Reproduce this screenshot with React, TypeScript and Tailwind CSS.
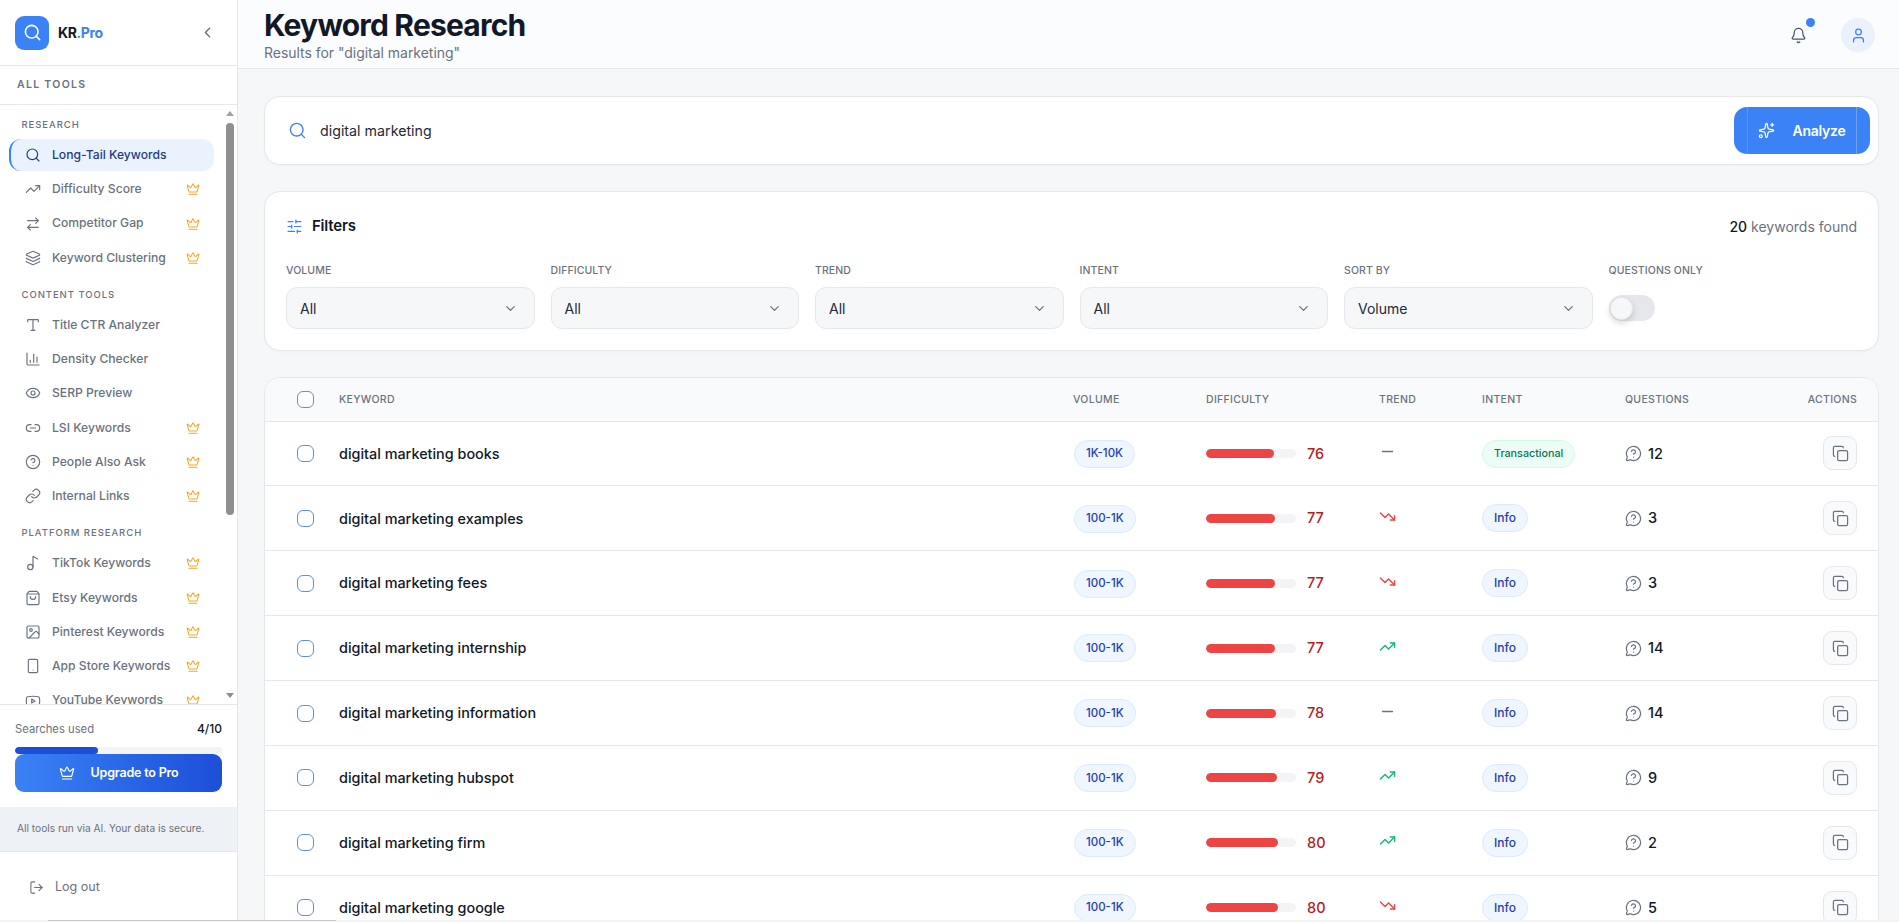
import React from "react";
import {
  Search, ChevronLeft, TrendingUp, TrendingDown, ArrowRightLeft, Layers, Type, ChartColumn, Eye, Link2,
  CircleHelp, Link, Music2, ShoppingBag, Image, Smartphone, Youtube, Crown, LogOut, Bell, User, Sparkles,
  SlidersHorizontal, ChevronDown, MessageCircleQuestion, Copy, Minus,
} from "lucide-react";

type Tool = { label: string; icon: React.ElementType; pro?: boolean; active?: boolean };
const groups: { title: string; items: Tool[] }[] = [
  {
    title: "RESEARCH",
    items: [
      { label: "Long-Tail Keywords", icon: Search, active: true },
      { label: "Difficulty Score", icon: TrendingUp, pro: true },
      { label: "Competitor Gap", icon: ArrowRightLeft, pro: true },
      { label: "Keyword Clustering", icon: Layers, pro: true },
    ],
  },
  {
    title: "CONTENT TOOLS",
    items: [
      { label: "Title CTR Analyzer", icon: Type },
      { label: "Density Checker", icon: ChartColumn },
      { label: "SERP Preview", icon: Eye },
      { label: "LSI Keywords", icon: Link2, pro: true },
      { label: "People Also Ask", icon: CircleHelp, pro: true },
      { label: "Internal Links", icon: Link, pro: true },
    ],
  },
  {
    title: "PLATFORM RESEARCH",
    items: [
      { label: "TikTok Keywords", icon: Music2, pro: true },
      { label: "Etsy Keywords", icon: ShoppingBag, pro: true },
      { label: "Pinterest Keywords", icon: Image, pro: true },
      { label: "App Store Keywords", icon: Smartphone, pro: true },
      { label: "YouTube Keywords", icon: Youtube, pro: true },
    ],
  },
];

const rows = [
  { k: "digital marketing books", v: "1K-10K", d: 76, t: "flat", i: "Transactional", q: 12 },
  { k: "digital marketing examples", v: "100-1K", d: 77, t: "down", i: "Info", q: 3 },
  { k: "digital marketing fees", v: "100-1K", d: 77, t: "down", i: "Info", q: 3 },
  { k: "digital marketing internship", v: "100-1K", d: 77, t: "up", i: "Info", q: 14 },
  { k: "digital marketing information", v: "100-1K", d: 78, t: "flat", i: "Info", q: 14 },
  { k: "digital marketing hubspot", v: "100-1K", d: 79, t: "up", i: "Info", q: 9 },
  { k: "digital marketing firm", v: "100-1K", d: 80, t: "up", i: "Info", q: 2 },
  { k: "digital marketing google", v: "100-1K", d: 80, t: "down", i: "Info", q: 5 },
];

const filters = [
  { l: "VOLUME", v: "All" },
  { l: "DIFFICULTY", v: "All" },
  { l: "TREND", v: "All" },
  { l: "INTENT", v: "All" },
  { l: "SORT BY", v: "Volume" },
];

function Trend({ t }: { t: string }) {
  if (t === "up") return <TrendingUp className="w-[17px] h-[17px] text-[#10b981] -translate-y-[2px]" />;
  if (t === "down") return <TrendingDown className="w-[17px] h-[17px] text-[#ef4444] -translate-y-[2px]" />;
  return <Minus className="w-[17px] h-[17px] text-[#6b7280] -translate-y-[2px]" />;
}

export default function App() {
  return (
    <div className="relative flex h-[922px] w-[1899px] overflow-hidden bg-[#f5f7f9] font-['Inter','Noto_Sans',sans-serif] text-[#111827]">
      <aside className="flex h-full w-[238px] shrink-0 flex-col border-r border-[#e5e7eb] bg-white">
        <div className="flex h-[66px] shrink-0 items-center border-b border-[#e5e7eb] pl-[15px] pr-[21px]">
          <div className="flex h-[34px] w-[34px] items-center justify-center rounded-[9px] bg-[#3b82f6]">
            <Search className="h-[19px] w-[19px] text-white" strokeWidth={2} />
          </div>
          <span className="ml-[9px] text-[14px] font-bold tracking-[-0.4px] text-[#111827]">
            KR<span className="text-[#3b82f6]">.Pro</span>
          </span>
          <ChevronLeft className="ml-auto h-[17px] w-[17px] text-[#6b7280]" />
        </div>
        <div className="flex h-[39px] shrink-0 items-center border-b border-[#e5e7eb] pl-[17px] text-[10.5px] font-semibold tracking-[1.3px] text-[#6b7280]">
          ALL TOOLS
        </div>
        <div className="relative h-[599px] shrink-0 overflow-hidden pl-[9px] pr-[23px]">
          {groups.map((g, gi) => (
            <div key={g.title} className={gi === 0 ? "pt-[12px]" : "pt-[10.85px]"}>
              <div className="mb-[7.85px] h-[14px] translate-y-[0.5px] pl-[12.5px] text-[9.5px] font-medium leading-[14px] tracking-[0.95px] text-[#6b7280]">{g.title}</div>
              {g.items.map((it) => {
                const Icon = it.icon;
                return (
                  <div
                    key={it.label}
                    className={
                      it.active
                        ? "mb-[2px] flex h-[32.3px] items-center rounded-[12px] border-l-[2px] border-[#3b82f6] bg-[#eaf2fe] pl-[14px] pr-[14px] text-[#1e3a8a]"
                        : "mb-[2px] flex h-[32.3px] items-center pl-[16px] pr-[14px] text-[#6b7280]"
                    }
                  >
                    <Icon className="h-[16px] w-[16px] shrink-0" strokeWidth={1.75} />
                    <span className="ml-[11px] whitespace-nowrap text-[12.15px] font-medium">{it.label}</span>
                    {it.pro && <Crown className="ml-auto h-[14px] w-[14px] shrink-0 text-[#f5a524]" strokeWidth={1.75} />}
                  </div>
                );
              })}
            </div>
          ))}
          <div className="absolute right-[2px] top-0 flex h-full w-[11px] flex-col items-center bg-white">
            <div className="mt-[6px] h-0 w-0 border-x-[4px] border-b-[5px] border-x-transparent border-b-[#9ca3af]" />
            <div className="mt-[7px] h-[392px] w-[8px] rounded-[4px] bg-[#8f8f8f]" />
            <div className="mb-[6px] mt-auto h-0 w-0 border-x-[4px] border-t-[5px] border-x-transparent border-t-[#8f8f8f]" />
          </div>
        </div>
        <div className="shrink-0 border-t border-[#e5e7eb] bg-white px-[15px]">
          <div className="mt-[15px] flex h-[18px] items-center justify-between">
            <span className="text-[11.25px] text-[#6b7280]">Searches used</span>
            <span className="text-[12px] font-medium text-[#111827]">4/10</span>
          </div>
          <div className="mt-[9px] h-[7px] w-[207px] overflow-hidden rounded-full bg-[#f3f4f6]">
            <div className="h-full w-[40%] rounded-full bg-[#1d4ed8]" />
          </div>
          <div className="flex h-[38px] w-[207px] items-center justify-center rounded-[9px] bg-gradient-to-r from-[#3b82f6] to-[#1d4ed8] text-white">
            <Crown className="h-[16px] w-[16px]" strokeWidth={1.75} />
            <span className="ml-[16px] text-[12.5px] font-semibold tracking-[-0.2px]">Upgrade to Pro</span>
          </div>
        </div>
        <div className="mt-[15px] flex h-[45px] shrink-0 items-center border-b border-[#e5e7eb] bg-[#eef1f6] pl-[17px] text-[10.2px] text-[#6b7280]">
          All tools run via AI. Your data is secure.
        </div>
        <div className="flex items-center pl-[29px] pt-[26px] text-[#6b7280]">
          <LogOut className="h-[15px] w-[15px]" strokeWidth={1.75} />
          <span className="ml-[11px] text-[12.5px]">Log out</span>
        </div>
      </aside>

      <main className="flex min-w-0 flex-1 flex-col">
        <header className="flex h-[69px] shrink-0 items-start justify-between border-b border-[#e5e7eb] bg-[#fbfcfe] pl-[26px] pr-[24px]">
          <div className="pt-[7px]">
            <h1 className="text-[30px] font-bold leading-[36px] tracking-[-0.8px] text-[#111827]">Keyword Research</h1>
            <p className="pt-[1px] text-[14px] leading-[18px] tracking-[-0.03px] text-[#6b7280]">Results for "digital marketing"</p>
          </div>
          <div className="flex items-center pt-[18px]">
            <div className="relative mr-[33px] -translate-x-[1px]">
              <Bell className="h-[17px] w-[17px] text-[#4b5563]" strokeWidth={1.75} />
              <span className="absolute -right-[8px] -top-[9px] h-[9px] w-[9px] rounded-full bg-[#3b82f6]" />
            </div>
            <div className="flex h-[34px] w-[34px] items-center justify-center rounded-full bg-[#eaf1fb]">
              <User className="h-[17px] w-[17px] text-[#3b82f6]" strokeWidth={1.75} />
            </div>
          </div>
        </header>

        <div className="flex flex-col pl-[26px] pr-[20px] pt-[27px]">
          <section className="flex h-[68.5px] items-center rounded-[16px] border border-[#e5e7eb] bg-white pl-[23px] pr-[8px] shadow-[0_1px_2px_rgba(0,0,0,0.03)]">
            <Search className="h-[19px] w-[19px] text-[#3b82f6]" strokeWidth={1.75} />
            <span className="ml-[13px] text-[14.25px] text-[#1f2937]">digital marketing</span>
            <div className="relative ml-auto flex h-[47px] w-[136px] items-center justify-center rounded-[13px] bg-[#3b82f6] text-white">
              <div className="absolute bottom-0 left-[13px] top-0 w-px bg-white/15" />
              <div className="absolute bottom-0 right-[13px] top-0 w-px bg-white/25" />
              <Sparkles className="h-[17px] w-[17px]" strokeWidth={1.75} />
              <span className="ml-[17px] text-[14px] font-semibold tracking-[-0.25px]">Analyze</span>
            </div>
          </section>

          <section className="mt-[26px] h-[160px] rounded-[16px] border border-[#e5e7eb] bg-white px-[21px] shadow-[0_1px_2px_rgba(0,0,0,0.03)]">
            <div className="flex h-[70px] items-center justify-between">
              <div className="flex items-center">
                <SlidersHorizontal className="h-[17px] w-[17px] text-[#3b82f6]" strokeWidth={1.75} />
                <span className="ml-[9px] text-[15px] font-semibold tracking-[-0.2px] text-[#111827]">Filters</span>
              </div>
              <div className="text-[14px] text-[#6b7280]">
                <span className="font-medium text-[#111827]">20</span> keywords found
              </div>
            </div>
            <div className="grid grid-cols-6 gap-x-[16px]">
              {filters.map((f) => (
                <div key={f.l}>
                  <div className="h-[18px] text-[10.5px] font-medium leading-[18px] tracking-[0.1px] text-[#6b7280]">{f.l}</div>
                  <div className="mt-[7.5px] flex h-[42px] items-center justify-between rounded-[11px] border border-[#e5e7eb] bg-[#f6f7f9] pl-[13px] pr-[16px] text-[14px] text-[#1f2937]">
                    <span>{f.v}</span>
                    <ChevronDown className="h-[15px] w-[15px] text-[#6b7280]" />
                  </div>
                </div>
              ))}
              <div>
                <div className="h-[18px] text-[10.5px] font-medium leading-[18px] tracking-[0.1px] text-[#6b7280]">QUESTIONS ONLY</div>
                <div className="mt-[15.5px] flex h-[26px] w-[46px] items-center rounded-full bg-[#e5e7eb]">
                  <div className="h-[23px] w-[23px] translate-x-[1px] rounded-full border border-[#e5e7eb] bg-[#f6f7f9] shadow-[0_3px_6px_rgba(0,0,0,0.15)]" />
                </div>
              </div>
            </div>
          </section>

          <section className="mt-[26.5px] overflow-hidden rounded-t-[16px] border border-[#e5e7eb] bg-white">
            <div className="grid h-[43.5px] grid-cols-[73px_735px_133px_173px_103px_143px_1fr] items-center border-b border-[#e5e7eb] bg-[#f9fafb] pr-[21px] text-[10.5px] font-medium tracking-[0.3px] text-[#6b7280]">
              <div className="pl-[32px]">
                <div className="h-[17px] w-[17px] rounded-[6px] border border-[#5e90d8] bg-white" />
              </div>
              <div className="pl-px pt-px">KEYWORD</div>
              <div className="pt-px">VOLUME</div>
              <div className="pt-px">DIFFICULTY</div>
              <div className="pt-px">TREND</div>
              <div className="pt-px">INTENT</div>
              <div className="flex items-center justify-between pt-px"><span>QUESTIONS</span><span>ACTIONS</span></div>
            </div>
            {rows.map((r) => (
              <div key={r.k} className="grid h-[64.9px] grid-cols-[73px_735px_133px_173px_103px_143px_1fr] items-center border-b border-[#e5e7eb] pr-[21px]">
                <div className="pl-[32px]">
                  <div className="h-[17px] w-[17px] rounded-[6px] border border-[#5e90d8] bg-white" />
                </div>
                <div className="whitespace-nowrap pl-px text-[14.4px] font-[450] text-[#111827]">{r.k}</div>
                <div>
                  <span className="ml-px inline-flex h-[28px] items-center rounded-full border border-[#dbeafe] bg-[#eff6ff] px-[11px] text-[11.5px] font-medium text-[#1e40af]">{r.v}</span>
                </div>
                <div className="flex items-center">
                  <div className="h-[9px] w-[90px] overflow-hidden rounded-full bg-[#f3f4f6]">
                    <div className="h-full rounded-full bg-[#ef4444]" style={{ width: `${r.d}%` }} />
                  </div>
                  <span className="ml-[11px] text-[14.5px] font-[450] text-[#b91c1c]">{r.d}</span>
                </div>
                <div><Trend t={r.t} /></div>
                <div>
                  {r.i === "Info" ? (
                    <span className="inline-flex h-[28px] items-center rounded-full border border-[#dbeafe] bg-[#eff6ff] px-[11px] text-[12px] font-medium text-[#1e40af]">Info</span>
                  ) : (
                    <span className="inline-flex h-[28px] items-center rounded-full border border-[#d1fae5] bg-[#ecfdf5] px-[11px] text-[10.75px] font-medium text-[#047857]">{r.i}</span>
                  )}
                </div>
                <div className="flex items-center justify-between">
                  <div className="flex items-center">
                    <MessageCircleQuestion className="h-[17px] w-[17px] text-[#6b7280]" strokeWidth={1.75} />
                    <span className="ml-[6px] text-[14.5px] font-[450] text-[#111827]">{r.q}</span>
                  </div>
                  <div className="flex h-[34px] w-[34px] items-center justify-center rounded-[9px] border border-[#e5e7eb] bg-[#f9fafb]">
                    <Copy className="h-[17px] w-[17px] text-[#6b7280]" strokeWidth={1.75} />
                  </div>
                </div>
              </div>
            ))}
          </section>
        </div>
      </main>

      <div className="absolute bottom-0 left-0 h-[2.5px] w-full bg-[#f3f3f3]">
        <div className="ml-[48px] h-px w-[288px] bg-[#c8c8c8]" />
      </div>
    </div>
  );
}
